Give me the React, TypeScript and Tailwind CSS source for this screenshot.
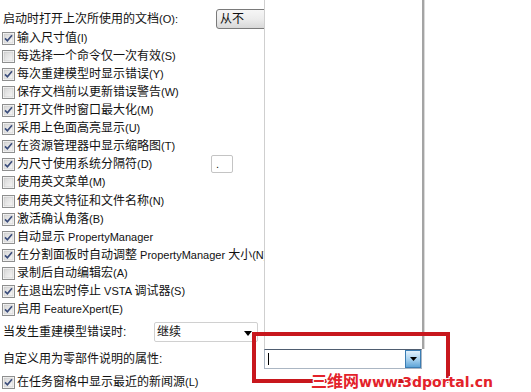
import React from 'react';

// split mixed text so latin runs get the smaller UI size
const Txt = ({ text }: { text: string }) => (
  <>
    {text.split(/([\x20-\x7E]+)/).map((part, i) =>
      i % 2 === 1 ? (
        <span key={i} className="text-[11px]">
          {part}
        </span>
      ) : (
        <span key={i}>{part}</span>
      )
    )}
  </>
);

const CheckBox = ({ checked }: { checked: boolean }) => (
  <svg width="13" height="13" viewBox="0 0 13 13" className="shrink-0">
    <defs>
      <linearGradient id="cbg" x1="0" y1="0" x2="1" y2="1">
        <stop offset="0" stopColor="#d6d6d6" />
        <stop offset="1" stopColor="#f7f7f7" />
      </linearGradient>
    </defs>
    <rect x="0.5" y="0.5" width="12" height="12" fill="#ffffff" stroke="#8e8f8f" />
    <rect x="2" y="2" width="9" height="9" fill="url(#cbg)" stroke="#c4c4c4" strokeWidth="0.6" />
    {checked && (
      <path d="M3 6.3 L5.4 8.8 L10 3.2" fill="none" stroke="#3c4e7c" strokeWidth="1.7" />
    )}
  </svg>
);

const options: { label: string; checked: boolean; extra?: string }[] = [
  { label: '输入尺寸值(I)', checked: true },
  { label: '每选择一个命令仅一次有效(S)', checked: false },
  { label: '每次重建模型时显示错误(Y)', checked: true },
  { label: '保存文档前以更新错误警告(W)', checked: false },
  { label: '打开文件时窗口最大化(M)', checked: true },
  { label: '采用上色面高亮显示(U)', checked: true },
  { label: '在资源管理器中显示缩略图(T)', checked: true },
  { label: '为尺寸使用系统分隔符(D)', checked: true, extra: 'sep' },
  { label: '使用英文菜单(M)', checked: false },
  { label: '使用英文特征和文件名称(N)', checked: false, extra: 'gap' },
  { label: '激活确认角落(B)', checked: true },
  { label: '自动显示 PropertyManager', checked: true },
  { label: '在分割面板时自动调整 PropertyManager 大小(N)', checked: true },
  { label: '录制后自动编辑宏(A)', checked: false },
  { label: '在退出宏时停止 VSTA 调试器(S)', checked: true },
  { label: '启用 FeatureXpert(E)', checked: true },
];

export default function App() {
  return (
    <div className="relative w-[531px] h-[392px] overflow-hidden bg-white text-[12px] leading-none text-[#111] font-['Liberation_Sans','Noto_Sans_CJK_SC',sans-serif]">
      <div className="pt-[9px] flex flex-col">
        {/* open last documents */}
        <div className="flex items-center h-[20px] pl-[3px]">
          <span className="w-[213px] whitespace-nowrap">
            <Txt text="启动时打开上次所使用的文档(O):" />
          </span>
          <div className="w-[70px] h-[20px] rounded-[3px] border border-[#7a7a7a] bg-gradient-to-b from-[#f6f6f6] via-[#ececec] to-[#d8d8d8] flex items-center pl-[3px]">
            从不
          </div>
        </div>

        {options.map((o) => (
          <div
            key={o.label}
            className={`flex items-center h-[18px] pl-[2px] gap-[2px] whitespace-nowrap ${o.extra === 'gap' ? 'mt-px' : ''}`}
          >
            <CheckBox checked={o.checked} />
            <span className="w-[192px]">
              <Txt text={o.label} />
            </span>
            {o.extra === 'sep' && (
              <div className="w-[22px] h-[18px] rounded-[2px] border border-[#c4c4c4] bg-white text-[11px] pl-[4px] pt-[3px]">
                .
              </div>
            )}
          </div>
        ))}

        {/* rebuild error */}
        <div className="flex items-center h-[20px] mt-[4px] pl-[3px] whitespace-nowrap">
          <span className="w-[151px]">当发生重建模型错误时:</span>
          <div className="relative w-[104px] h-[20px] rounded-[2px] border border-[#d0d0d0] bg-white flex items-center pl-[2px]">
            继续
            <svg width="8" height="5" viewBox="0 0 8 5" className="absolute right-[5px] top-[8px]">
              <path d="M0 0 H8 L4 5 Z" fill="#000" />
            </svg>
          </div>
        </div>

        {/* component description property */}
        <div className="flex items-center h-[20px] mt-[7px] pl-[3px] whitespace-nowrap">
          <span className="w-[261px]">自定义用为零部件说明的属性:</span>
          <div className="relative w-[158px] h-[20px] border border-[#abb6c3] border-t-[#4f5d70] bg-white">
            <div className="absolute left-[3px] top-[3px] w-px h-[12px] bg-black" />
            <div className="absolute right-0 top-0 w-[16px] h-[18px] border border-[#3b7db3] bg-gradient-to-b from-[#e3f1fb] via-[#a9d3f0] to-[#5ea5d8] flex items-center justify-center">
              <svg width="7" height="4" viewBox="0 0 7 4">
                <path d="M0 0 H7 L3.5 4 Z" fill="#000" />
              </svg>
            </div>
          </div>
        </div>

        <div className="flex items-center h-[18px] mt-[4px] pl-[2px] gap-[2px] whitespace-nowrap">
          <CheckBox checked />
          <span>
            <Txt text="在任务窗格中显示最近的新闻源(L)" />
          </span>
        </div>
        <div className="flex items-center h-[18px] pl-[2px] whitespace-nowrap">
          <CheckBox checked={false} />
        </div>
      </div>

      {/* opened drop-down list */}
      <div className="absolute left-[264px] top-0 w-[160px] h-[349px] bg-white border-l border-[#cfcfcf] border-r-[2px] border-r-[#a4a4a4] shadow-[1px_0_0_#dadada]" />

      {/* annotation box */}
      <div className="absolute left-[252px] top-[332px] w-[198px] h-[51px] border-[4px] border-[#c8171d]" />

      {/* watermark */}
      <div className="absolute left-[311px] top-[372px] whitespace-nowrap font-bold text-[#e3222a] [text-shadow:1px_0_0_#fff,-1px_0_0_#fff,0_1px_0_#fff,0_-1px_0_#fff,1px_1px_0_#fff,-1px_-1px_0_#fff,1px_-1px_0_#fff,-1px_1px_0_#fff]">
        <span className="text-[16px] font-['Noto_Sans_CJK_SC',sans-serif]">三维网</span>
        <span className="text-[14px] font-['DejaVu_Sans',sans-serif]">www.3dportal.cn</span>
      </div>
    </div>
  );
}
